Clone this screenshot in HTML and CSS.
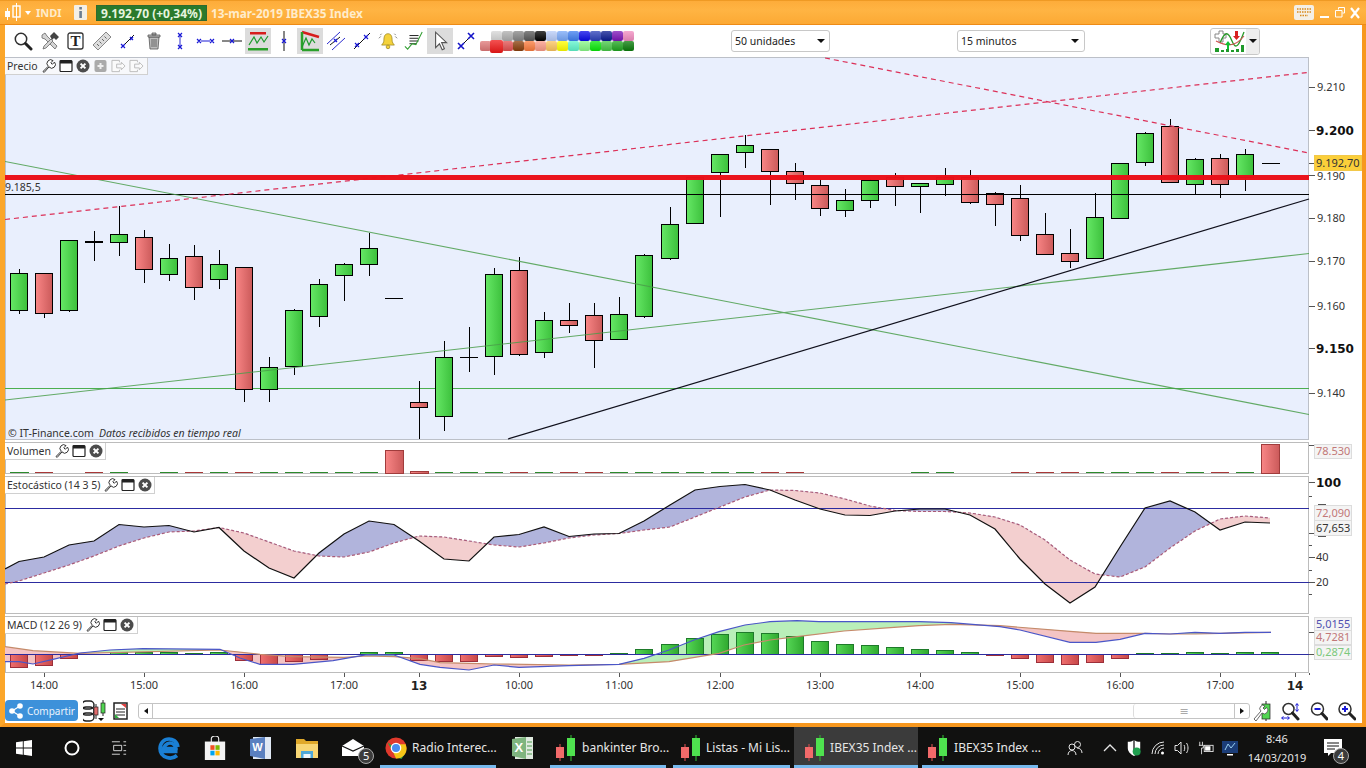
FILE: index.html
```html
<!DOCTYPE html>
<html lang="es">
<head>
<meta charset="utf-8">
<title>IBEX35 Index</title>
<link rel="stylesheet" href="styles.css">
</head>
<body>
<svg class="defs" aria-hidden="true">
  <defs>
    <linearGradient id="gg"><stop offset="0" stop-color="#66e866"/><stop offset="1" stop-color="#3cc03c"/></linearGradient>
    <linearGradient id="gr"><stop offset="0" stop-color="#f98686"/><stop offset="1" stop-color="#cb5a5a"/></linearGradient>
    <linearGradient id="gb"><stop offset="0" stop-color="#56d756"/><stop offset="1" stop-color="#2fa92f"/></linearGradient>
    <linearGradient id="gd"><stop offset="0" stop-color="#ef6f6f"/><stop offset="1" stop-color="#c84848"/></linearGradient>
    <clipPath id="aboveD"><polygon points="5,584 19,581 44,573 69,565 94,556 119,546 144,538 169,532 194,531 219,527.5 244,533 269,542 294,551 319,556 344,557 369,552 394,543 419,536 444,537 469,541 494,545 519,547 544,543 569,538 594,535 619,533.5 644,530 670,527 695,517 720,507 745,497 770,490 795,490.5 820,493 845,499 870,506 895,510.5 920,511.5 945,511.5 970,513 995,517 1020,525 1045,540 1070,560 1095,574 1120,577 1145,567 1170,548 1195,531 1220,519 1245,516 1270,518 1270,476 5,476"/></clipPath>
    <clipPath id="aboveS"><polygon points="5,646.7 33,650.7 67,652.7 80,653.3 220,650 260,654.3 293,656.7 344,657.3 367,656 394,656.7 420,658.7 440,662.7 469,663.3 494,664 569,665 619,664.3 669,661.7 719,653.3 744,645 770,640 797,636.7 844,631 894,627.3 919,625.7 951,624.3 1000,625.7 1070,631.3 1096,633.3 1145,633.3 1170,634 1195,634 1220,633.3 1271,632.3 1271,616 5,616"/></clipPath>
    <polygon id="stochFill" points="5,569 19,561.5 44,557 69,545 94,541 119,524.5 144,527 169,525.5 194,532 219,527.5 244,551 269,568 294,578 319,553 344,534 369,521 394,524.5 419,541 444,559 469,561 494,537 519,534.5 544,527 569,536.5 594,534 619,533.5 644,521 670,505 695,490 720,486.5 745,484.5 770,490 795,500 820,509 845,515 870,515.5 895,511 920,509 945,509 970,515 995,529 1020,559 1045,584 1070,603 1095,587 1120,547 1145,508 1170,501 1195,512 1220,530 1245,522 1270,523 1270,518 1245,516 1220,519 1195,531 1170,548 1145,567 1120,577 1095,574 1070,560 1045,540 1020,525 995,517 970,513 945,511.5 920,511.5 895,510.5 870,506 845,499 820,493 795,490.5 770,490 745,497 720,507 695,517 670,527 644,530 619,533.5 594,535 569,538 544,543 519,547 494,545 469,541 444,537 419,536 394,543 369,552 344,557 319,556 294,551 269,542 244,533 219,527.5 194,531 169,532 144,538 119,546 94,556 69,565 44,573 19,581 5,584"/>
    <polygon id="macdFill" points="5,661.7 19,661.7 33,664 53,659.3 80,653 110,650 143,648.7 220,649.3 240,658 260,664.3 293,664.3 333,660.7 367,654.7 394,655 420,664.3 440,667.3 469,670 494,665 519,667.3 569,665.7 619,664.3 644,658.3 669,650 694,640 719,631.7 745,625 770,621.7 797,620.7 819,621.7 919,621.7 951,622.7 1000,626.7 1020,630 1070,642.3 1096,642.3 1120,639.3 1145,633.3 1170,634 1195,632.3 1220,633.3 1245,632.3 1271,632.3 1220,633.3 1195,634 1170,634 1145,633.3 1096,633.3 1070,631.3 1000,625.7 951,624.3 919,625.7 894,627.3 844,631 797,636.7 770,640 744,645 719,653.3 669,661.7 619,664.3 569,665 494,664 469,663.3 440,662.7 420,658.7 394,656.7 367,656 344,657.3 293,656.7 260,654.3 220,650 80,653.3 67,652.7 33,650.7 5,646.7"/>
    <symbol id="wrench" viewBox="0 0 14 14"><path class="ic-out" d="M1 12.5 6.3 7.2A3.6 3.6 0 0 1 11 1.6L8.8 3.8 10.3 5.3 12.5 3.1A3.6 3.6 0 0 1 7 7.9L2.2 13.4Z"/></symbol>
    <symbol id="win" viewBox="0 0 14 14"><rect class="ic-win" x="1" y="1.5" width="12" height="11" rx="1"/><rect class="ic-dark" x="1" y="1.5" width="12" height="3"/></symbol>
    <symbol id="close" viewBox="0 0 14 14"><circle class="ic-close" cx="7" cy="7" r="6.5"/><path class="ic-x" d="M4.6 4.6 9.4 9.4M9.4 4.6 4.6 9.4"/></symbol>
    <symbol id="candleTask" viewBox="0 0 24 26"><path class="t-wg" d="M17 0V26"/><rect class="t-g" x="13" y="3" width="8" height="18"/><path class="t-wr" d="M6 9V26"/><rect class="t-r" x="2" y="12" width="8" height="11"/></symbol>
  </defs>
</svg>

<div class="app">
  <header class="title">
    <svg class="t-logo" viewBox="0 0 18 20"><rect class="wf" x="2" y="8" width="5" height="6"/><path class="ws" d="M4.500 5V17M13.500 0V18"/><rect class="wo" x="10" y="3" width="7" height="11"/></svg>
    <span class="caret"></span>
    <span class="t-sym">INDI</span>
    <svg class="t-info" viewBox="0 0 13 15"><rect class="if" width="13" height="15" rx="1"/><rect class="id" x="5.300" y="2" width="2.600" height="2.500"/><rect class="id" x="5.300" y="6" width="2.600" height="7"/></svg>
    <span class="t-price">9.192,70 (+0,34%)</span>
    <span class="t-date">13-mar-2019 IBEX35 Index</span>
    <span class="t-right">
      <svg class="t-kbd" viewBox="0 0 20 15"><rect class="if" width="20" height="15" rx="2"/><path class="kk" d="M3 4H17M3 7H17M6 10.500H14"/></svg>
      <svg class="t-ctl" viewBox="0 0 10 14"><rect class="wf" x="0" y="10" width="9" height="2"/></svg>
      <svg class="t-ctl" viewBox="0 0 10 14"><path class="ws" d="M3.500 3.500V1.500H9.500V7H7.500M.5 4.500H7V11H.5Z"/></svg>
      <svg class="t-ctl" viewBox="0 0 10 14"><path class="wx" d="M1 2 9 12M9 2 1 12"/></svg>
    </span>
  </header>

  <nav class="toolbar">
    <span class="tool first"><svg viewBox="0 0 20 20"><circle class="i-lens" cx="8" cy="8" r="5.700"/><path class="i-handle" d="M12.500 12.500 18 18"/></svg></span>
    <span class="tool"><svg viewBox="0 0 20 20"><path class="i-gray" d="M2 4 5 2 7 5 17 15 15 18 5 8 2 7Z"/><path class="i-gray" d="M4 15 11 8 13 10 6 17 3 18Z"/><path class="i-black" d="M10 5 14 1 19 6 16 9 14 7 12 9Z"/></svg></span>
    <span class="tool"><svg viewBox="0 0 20 20"><rect class="i-box" x="2" y="2" width="15" height="16" rx="2"/><text class="i-t" x="9.500" y="15">T</text></svg></span>
    <span class="tool"><svg viewBox="0 0 20 20"><path class="i-ruler" d="M1 14 14 1 19 6 6 19Z"/><path class="i-tick" d="M5 13 7 15M7.500 10.500 9.500 12.500M10 8 12 10M12.500 5.500 14.500 7.500"/></svg></span>
    <span class="tool"><svg viewBox="0 0 20 20"><path class="i-line" d="M4 16 16 4"/><path class="i-bx" d="M3 13 7 17M7 13 3 17M12 6 15 9M15 6 12 9"/></svg></span>
    <span class="tool"><svg viewBox="0 0 20 20"><path class="i-can" d="M5 6H15L14 18H6Z"/><path class="i-can" d="M4 4H16V6H4ZM8 2H12V4H8Z"/><path class="i-tick" d="M8 8V16M10 8V16M12 8V16"/></svg></span>
    <span class="tool"><svg viewBox="0 0 20 20"><path class="i-bl" d="M10 3V17"/><path class="i-bx" d="M8 2 12 6M12 2 8 6M8 14 12 18M12 14 8 18"/></svg></span>
    <span class="tool"><svg viewBox="0 0 20 20"><path class="i-bx" d="M1 8 5 12M5 8 1 12M14 8 18 12M18 8 14 12M5 10H14"/></svg></span>
    <span class="tool"><svg viewBox="0 0 20 20"><path class="i-line" d="M0 10H20"/><path class="i-bx" d="M8 8 12 12M12 8 8 12"/></svg></span>
    <span class="tool on"><svg viewBox="0 0 22 22"><rect class="i-redb" x="3" y="2" width="16" height="2.500"/><rect class="i-grnb" x="1" y="18" width="20" height="2.500"/><path class="i-zig" d="M2 15 7 7 10 13 14 7 17 12 21 6"/></svg></span>
    <span class="tool"><svg viewBox="0 0 20 20"><path class="i-line" d="M10 0V20"/><path class="i-bx" d="M8 8 12 12M12 8 8 12"/></svg></span>
    <span class="tool on"><svg viewBox="0 0 22 22"><path class="i-red2" d="M3 2 20 7"/><path class="i-grn2" d="M3 20H20M3 2V20"/><path class="i-zig" d="M3 17 7 8 10 15 13 9 16 13"/></svg></span>
    <span class="tool"><svg viewBox="0 0 20 20"><path class="i-bl" d="M1 13 14 1M6 19 19 7"/><path class="i-line" d="M4 14 14 6"/><path class="i-bx" d="M8 8 11 11M11 8 8 11"/></svg></span>
    <span class="tool"><svg viewBox="0 0 20 20"><path class="i-line" d="M2 18 18 2"/><path class="i-bx" d="M3 12 7 16M7 12 3 16M12 4 16 8M16 4 12 8"/></svg></span>
    <span class="tool"><svg viewBox="0 0 22 22"><path class="i-bell" d="M11 3C7 3 6.500 7 6.500 10 6.500 13 5 14 4 15.500H18C17 14 15.500 13 15.500 10 15.500 7 15 3 11 3Z"/><circle class="i-bell" cx="11" cy="17.500" r="2"/><path class="i-ray" d="M3 6 1 8M19 6 21 8M4 3 2.500 4.500M18 3 19.500 4.500"/></svg></span>
    <span class="tool"><svg viewBox="0 0 22 22"><path class="i-line" d="M6 5H16M6 8H16M6 11H16M6 14H14"/><path class="i-grn1" d="M1 17 4 20 9 14 13 15 20 1"/></svg></span>
    <span class="tool on"><svg viewBox="0 0 20 20"><path class="i-arrow" d="M6 2 6 16 9.500 12.500 12 18 14 17 11.500 11.500 16 11.500Z"/></svg></span>
    <span class="tool"><svg viewBox="0 0 20 20"><path class="i-line" d="M5 15 15 5"/><path class="i-bx2" d="M2 12 8 18M8 12 2 18M12 2 18 8M18 2 12 8"/></svg></span>
    <div class="palette">
      <div class="pal-row">
        <i class="sw c1"></i><i class="sw c2"></i><i class="sw c3"></i><i class="sw c4"></i><i class="sw c5"></i><i class="sw c6"></i><i class="sw c7"></i><i class="sw c8"></i><i class="sw c9"></i><i class="sw c10"></i><i class="sw c11"></i><i class="sw c12"></i><i class="sw c13"></i>
      </div>
      <div class="pal-row">
        <i class="sw d1"></i><i class="sw d2"></i><i class="sw d3"></i><i class="sw d4"></i><i class="sw d5"></i><i class="sw d6"></i><i class="sw d7"></i><i class="sw d8"></i><i class="sw d9"></i><i class="sw d10"></i><i class="sw d11"></i><i class="sw d12"></i><i class="sw d13"></i><i class="sw d14"></i>
      </div>
    </div>
    <span class="select sel-a">50 unidades<b class="sel-arrow"></b></span>
    <span class="select sel-b">15 minutos<b class="sel-arrow"></b></span>
    <span class="splitbtn">
      <svg class="split-ic" viewBox="0 0 34 24"><path class="p-gray" d="M3 5H7V2H11V5H14V9H11V13H7V9H3Z"/><path class="p-grn" d="M8 14C13 2 16 2 20 12S27 16 32 3"/><path class="p-red" d="M4 12C12 16 22 20 32 7"/><path class="p-up" d="M13 16 16 12 19 16H17V20H15V16Z"/><path class="p-dn" d="M23 2H26V7H28L24.500 11 21 7H23Z"/><path class="p-bars" d="M3 19H7V23H3ZM9 21H12V23H9ZM14 20H17V23H14ZM19 21H22V23H19ZM24 20H27V23H24ZM29 16H32V23H29Z"/></svg>
      <span class="split-arrow"><b class="sel-arrow"></b></span>
    </span>
  </nav>

  <main class="charts">
    <section class="pane pane-price">
      <svg class="plot" viewBox="5 57 1357 383" shape-rendering="crispEdges">
        <rect class="plot-bg" x="5.500" y="57.500" width="1303" height="381.500"/>
        <path class="h-green" d="M5 388.500H1309"/>
        <path class="wick" d="M19.500 269V314M44.500 273V318M69.500 240V312M94.500 231V261M119.500 206V256M144.500 230V283M169.500 244V281M194.500 245V300M219.500 250V289M244.500 267V402M269.500 357V402M294.500 309V375M319.500 279V327M344.500 263V301M369.500 233V276M419.500 381V439M444.500 341V431M469.500 327V372M494.500 268V375M519.500 257V356M544.500 312V358M569.500 303V333M594.500 303V368M619.500 297V339M644.500 254V318M670.500 207V260M720.500 154V217M745.500 135V168M770.500 149V205M795.500 163V200M820.500 179V216M845.500 189V217M870.500 179V208M895.500 173V206M920.500 183V213M945.500 168V196M970.500 170V204M995.500 192V226M1020.500 185V241M1045.500 213V254M1070.500 229V268M1095.500 193V258M1120.500 163V219M1145.500 132V166M1170.500 119V183M1195.500 158V194M1220.500 154V198M1245.500 149V191"/>
        <path class="doji-b" d="M85 241.500H103"/>
        <path class="wick" d="M385 298.500H403M460 357.500H478M1262 163.500H1280"/>
        <rect class="cg" x="10.500" y="273.500" width="17" height="37"/>
        <rect class="cr" x="35.500" y="273.500" width="17" height="40"/>
        <rect class="cg" x="60.500" y="240.500" width="17" height="70"/>
        <rect class="cg" x="110.500" y="234.500" width="17" height="8"/>
        <rect class="cr" x="135.500" y="237.500" width="17" height="32"/>
        <rect class="cg" x="160.500" y="258.500" width="17" height="16"/>
        <rect class="cr" x="185.500" y="256.500" width="17" height="31"/>
        <rect class="cg" x="210.500" y="264.500" width="17" height="15"/>
        <rect class="cr" x="235.500" y="267.500" width="17" height="122"/>
        <rect class="cg" x="260.500" y="367.500" width="17" height="22"/>
        <rect class="cg" x="285.500" y="310.500" width="17" height="56"/>
        <rect class="cg" x="310.500" y="284.500" width="17" height="32"/>
        <rect class="cg" x="335.500" y="264.500" width="17" height="11"/>
        <rect class="cg" x="360.500" y="248.500" width="17" height="16"/>
        <rect class="cr" x="410.500" y="402.500" width="17" height="5"/>
        <rect class="cg" x="435.500" y="357.500" width="17" height="59"/>
        <rect class="cg" x="485.500" y="274.500" width="17" height="82"/>
        <rect class="cr" x="510.500" y="270.500" width="17" height="84"/>
        <rect class="cg" x="535.500" y="320.500" width="17" height="32"/>
        <rect class="cr" x="560.500" y="320.500" width="17" height="5"/>
        <rect class="cr" x="585.500" y="315.500" width="17" height="25"/>
        <rect class="cg" x="610.500" y="314.500" width="17" height="25"/>
        <rect class="cg" x="635.500" y="255.500" width="17" height="61"/>
        <rect class="cg" x="661.500" y="224.500" width="17" height="34"/>
        <rect class="cg" x="686.500" y="177.500" width="17" height="46"/>
        <rect class="cg" x="711.500" y="154.500" width="17" height="18"/>
        <rect class="cg" x="736.500" y="145.500" width="17" height="7"/>
        <rect class="cr" x="761.500" y="149.500" width="17" height="22"/>
        <rect class="cr" x="786.500" y="171.500" width="17" height="12"/>
        <rect class="cr" x="811.500" y="185.500" width="17" height="23"/>
        <rect class="cg" x="836.500" y="200.500" width="17" height="10"/>
        <rect class="cg" x="861.500" y="180.500" width="17" height="20"/>
        <rect class="cr" x="886.500" y="177.500" width="17" height="9"/>
        <rect class="cg" x="911.500" y="183.500" width="17" height="3"/>
        <rect class="cg" x="936.500" y="177.500" width="17" height="7"/>
        <rect class="cr" x="961.500" y="177.500" width="17" height="25"/>
        <rect class="cr" x="986.500" y="193.500" width="17" height="11"/>
        <rect class="cr" x="1011.500" y="198.500" width="17" height="37"/>
        <rect class="cr" x="1036.500" y="234.500" width="17" height="20"/>
        <rect class="cr" x="1061.500" y="253.500" width="17" height="8"/>
        <rect class="cg" x="1086.500" y="217.500" width="17" height="41"/>
        <rect class="cg" x="1111.500" y="163.500" width="17" height="55"/>
        <rect class="cg" x="1136.500" y="133.500" width="17" height="29"/>
        <rect class="cr" x="1161.500" y="126.500" width="17" height="56"/>
        <rect class="cg" x="1186.500" y="159.500" width="17" height="25"/>
        <rect class="cr" x="1211.500" y="158.500" width="17" height="26"/>
        <rect class="cg" x="1236.500" y="154.500" width="17" height="23"/>
        <path class="h-black" d="M5 194.500H1309"/>
        <g shape-rendering="auto">
          <path class="t-green" d="M5 161.500 1309 414.500M5 400 1309 253.500"/>
          <path class="t-black" d="M508 439 1309 199"/>
          <path class="t-red" d="M5 219.500 1307 72.500M825 58 1309 153"/>
        </g>
        <rect class="h-red" x="5" y="175" width="1304" height="4.500"/>
        <text class="lbl" x="5" y="191">9.185,5</text>
        <text class="lbl" x="8" y="437">© IT-Finance.com</text>
        <text class="lbl it" x="99" y="437">Datos recibidos en tiempo real</text>
        <path class="tick" d="M1309 87.500H1315M1309 130.500H1315M1309 163.500H1315M1309 175.500H1315M1309 218.500H1315M1309 261.500H1315M1309 306.500H1315M1309 348.500H1315M1309 393.500H1315"/>
        <text class="ax" x="1317" y="91">9.210</text>
        <text class="ax ax-b" x="1316" y="135">9.200</text>
        <text class="ax" x="1317" y="180">9.190</text>
        <text class="ax" x="1317" y="222">9.180</text>
        <text class="ax" x="1317" y="265">9.170</text>
        <text class="ax" x="1317" y="310">9.160</text>
        <text class="ax ax-b" x="1316" y="353">9.150</text>
        <text class="ax" x="1317" y="397">9.140</text>
        <rect class="b-yellow" x="1314.500" y="155.500" width="47" height="15"/>
        <text class="ax" x="1316" y="167">9.192,70</text>
      </svg>
      <div class="legend leg-price"><span>Precio</span><svg class="li"><use href="#wrench"/></svg><svg class="li"><use href="#win"/></svg><svg class="li"><use href="#close"/></svg><svg class="li-dis" viewBox="0 0 14 14"><rect class="d-box" x="1" y="1" width="12" height="12" rx="2"/><path class="d-plus" d="M7 4V10M4 7H10"/></svg><svg class="li-dis" viewBox="0 0 16 14"><path class="d-out" d="M9 3V1H1V13H9V11M6 5H11V3L15 7 11 11V9H6Z"/></svg><svg class="li-dis" viewBox="0 0 16 14"><path class="d-out" d="M9 3V1H1V13H9V11M6 5H11V3L15 7 11 11V9H6Z"/></svg></div>
    </section>

    <section class="pane pane-vol">
      <svg class="plot" viewBox="5 442 1357 32" shape-rendering="crispEdges">
        <rect class="plot-w" x="5.500" y="442.500" width="1303" height="31"/>
        <path class="v-g" d="M10 472.500H29M110 472.500H128M160 472.500H178M210 472.500H228M260 472.500H278M285 472.500H303M310 472.500H328M335 472.500H353M360 472.500H378M435 472.500H453M460 472.500H478M485 472.500H503M535 472.500H553M610 472.500H628M635 472.500H653M661 472.500H679M686 472.500H704M711 472.500H729M736 472.500H754M911 472.500H929M936 472.500H954M1086 472.500H1104M1111 472.500H1129M1136 472.500H1154M1186 472.500H1204M1236 472.500H1254"/>
        <path class="v-r" d="M35 472.500H53M85 472.500H103M185 472.500H203M235 472.500H253M510 472.500H528M560 472.500H578M585 472.500H603M761 472.500H779M786 472.500H804M1011 472.500H1029M1036 472.500H1054M1061 472.500H1079M1161 472.500H1179M1211 472.500H1229"/>
        <rect class="vb" x="385.500" y="450.500" width="18" height="23"/>
        <rect class="vb" x="410.500" y="471.500" width="18" height="2"/>
        <rect class="vb" x="1261.500" y="444.500" width="18" height="29"/>
        <path class="tick" d="M1309 445.500H1314"/>
        <rect class="b-grey" x="1314.500" y="444.500" width="37" height="14"/>
        <text class="ax ax-r" x="1316" y="455">78.530</text>
      </svg>
      <div class="legend leg-vol"><span>Volumen</span><svg class="li"><use href="#wrench"/></svg><svg class="li"><use href="#win"/></svg><svg class="li"><use href="#close"/></svg></div>
    </section>

    <section class="pane pane-sto">
      <svg class="plot" viewBox="5 476 1357 138">
        <rect class="plot-w crisp" x="5.500" y="476.500" width="1303" height="137"/>
        <use href="#stochFill" class="f-pink"/>
        <use href="#stochFill" class="f-blue" clip-path="url(#aboveD)"/>
        <path class="h-blue crisp" d="M5 508.500H1309M5 582.500H1309"/>
        <polyline class="l-d" points="5,584 19,581 44,573 69,565 94,556 119,546 144,538 169,532 194,531 219,527.5 244,533 269,542 294,551 319,556 344,557 369,552 394,543 419,536 444,537 469,541 494,545 519,547 544,543 569,538 594,535 619,533.5 644,530 670,527 695,517 720,507 745,497 770,490 795,490.5 820,493 845,499 870,506 895,510.5 920,511.5 945,511.5 970,513 995,517 1020,525 1045,540 1070,560 1095,574 1120,577 1145,567 1170,548 1195,531 1220,519 1245,516 1270,518"/>
        <polyline class="l-k" points="5,569 19,561.5 44,557 69,545 94,541 119,524.5 144,527 169,525.5 194,532 219,527.5 244,551 269,568 294,578 319,553 344,534 369,521 394,524.5 419,541 444,559 469,561 494,537 519,534.5 544,527 569,536.5 594,534 619,533.5 644,521 670,505 695,490 720,486.5 745,484.5 770,490 795,500 820,509 845,515 870,515.5 895,511 920,509 945,509 970,515 995,529 1020,559 1045,584 1070,603 1095,587 1120,547 1145,508 1170,501 1195,512 1220,530 1245,522 1270,523"/>
        <path class="tick crisp" d="M1309 482.500H1315M1309 496.500H1312M1309 533.500H1315M1309 545.500H1312M1309 557.500H1315M1309 570.500H1312M1309 582.500H1315M1309 594.500H1312M1318 504.500H1326M1318 536.500H1326"/>
        <text class="ax ax-b" x="1316" y="487">100</text>
        <text class="ax" x="1316" y="561">40</text>
        <text class="ax" x="1316" y="586">20</text>
        <rect class="b-grey crisp" x="1314.500" y="505.500" width="37" height="15"/>
        <text class="ax ax-r" x="1316" y="517">72,090</text>
        <rect class="b-grey crisp" x="1314.500" y="520.500" width="37" height="15"/>
        <text class="ax" x="1316" y="532">67,653</text>
      </svg>
      <div class="legend leg-sto"><span>Estocástico (14 3 5)</span><svg class="li"><use href="#wrench"/></svg><svg class="li"><use href="#win"/></svg><svg class="li"><use href="#close"/></svg></div>
    </section>

    <section class="pane pane-macd">
      <svg class="plot" viewBox="5 616 1357 57">
        <rect class="plot-w crisp" x="5.500" y="616.500" width="1303" height="56"/>
        <use href="#macdFill" class="f-pink2"/>
        <use href="#macdFill" class="f-green" clip-path="url(#aboveS)"/>
        <g class="crisp">
          <rect class="hr" x="10.500" y="654.500" width="17" height="13"/><rect class="hr" x="35.500" y="654.500" width="17" height="11"/><rect class="hr" x="60.500" y="654.500" width="17" height="4"/>
          <rect class="hg" x="110.500" y="652.500" width="17" height="2"/><rect class="hg" x="135.500" y="652.500" width="17" height="2"/><rect class="hg" x="160.500" y="652.500" width="17" height="2"/><rect class="hg" x="185.500" y="653.500" width="17" height="1"/><rect class="hg" x="210.500" y="652.500" width="17" height="2"/>
          <rect class="hr" x="235.500" y="654.500" width="17" height="6"/><rect class="hr" x="260.500" y="654.500" width="17" height="10"/><rect class="hr" x="285.500" y="654.500" width="17" height="7"/><rect class="hr" x="310.500" y="654.500" width="17" height="5"/>
          <rect class="hg" x="360.500" y="652.500" width="17" height="2"/><rect class="hg" x="385.500" y="652.500" width="17" height="2"/>
          <rect class="hr" x="410.500" y="654.500" width="17" height="6"/><rect class="hr" x="435.500" y="654.500" width="17" height="7"/><rect class="hr" x="460.500" y="654.500" width="17" height="7"/>
          <rect class="hr" x="485.500" y="654.500" width="17" height="2"/><rect class="hr" x="510.500" y="654.500" width="17" height="3"/><rect class="hr" x="535.500" y="654.500" width="17" height="2"/><rect class="hr" x="560.500" y="654.500" width="17" height="1"/><rect class="hr" x="585.500" y="654.500" width="17" height="1"/>
          <rect class="hg" x="610.500" y="653.500" width="17" height="1"/><rect class="hg" x="635.500" y="649.500" width="17" height="5"/><rect class="hg" x="661.500" y="644.500" width="17" height="10"/><rect class="hg" x="686.500" y="638.500" width="17" height="16"/><rect class="hg" x="711.500" y="634.500" width="17" height="20"/><rect class="hg" x="736.500" y="632.500" width="17" height="22"/><rect class="hg" x="761.500" y="633.500" width="17" height="21"/><rect class="hg" x="786.500" y="636.500" width="17" height="18"/><rect class="hg" x="811.500" y="641.500" width="17" height="13"/><rect class="hg" x="836.500" y="644.500" width="17" height="10"/><rect class="hg" x="861.500" y="645.500" width="17" height="9"/><rect class="hg" x="886.500" y="647.500" width="17" height="7"/><rect class="hg" x="911.500" y="649.500" width="17" height="5"/><rect class="hg" x="936.500" y="650.500" width="17" height="4"/><rect class="hg" x="961.500" y="652.500" width="17" height="2"/>
          <rect class="hr" x="986.500" y="654.500" width="17" height="1"/><rect class="hr" x="1011.500" y="654.500" width="17" height="4"/><rect class="hr" x="1036.500" y="654.500" width="17" height="8"/><rect class="hr" x="1061.500" y="654.500" width="17" height="10"/><rect class="hr" x="1086.500" y="654.500" width="17" height="8"/><rect class="hr" x="1111.500" y="654.500" width="17" height="4"/>
          <rect class="hg" x="1136.500" y="653.500" width="17" height="1"/><rect class="hg" x="1161.500" y="653.500" width="17" height="1"/><rect class="hg" x="1186.500" y="652.500" width="17" height="2"/><rect class="hg" x="1211.500" y="653.500" width="17" height="1"/><rect class="hg" x="1236.500" y="652.500" width="17" height="2"/><rect class="hg" x="1261.500" y="652.500" width="17" height="2"/>
        </g>
        <path class="h-blue crisp" d="M5 654.500H1309"/>
        <polyline class="l-sig" points="5,646.7 33,650.7 67,652.7 80,653.3 220,650 260,654.3 293,656.7 344,657.3 367,656 394,656.7 420,658.7 440,662.7 469,663.3 494,664 569,665 619,664.3 669,661.7 719,653.3 744,645 770,640 797,636.7 844,631 894,627.3 919,625.7 951,624.3 1000,625.7 1070,631.3 1096,633.3 1145,633.3 1170,634 1195,634 1220,633.3 1271,632.3"/>
        <polyline class="l-macd" points="5,661.7 19,661.7 33,664 53,659.3 80,653 110,650 143,648.7 220,649.3 240,658 260,664.3 293,664.3 333,660.7 367,654.7 394,655 420,664.3 440,667.3 469,670 494,665 519,667.3 569,665.7 619,664.3 644,658.3 669,650 694,640 719,631.7 745,625 770,621.7 797,620.7 819,621.7 919,621.7 951,622.7 1000,626.7 1020,630 1070,642.3 1096,642.3 1120,639.3 1145,633.3 1170,634 1195,632.3 1220,633.3 1245,632.3 1271,632.3"/>
        <path class="tick crisp" d="M1309 632.500H1315M1309 654.500H1315"/>
        <rect class="b-grey crisp" x="1314.500" y="617.500" width="37" height="13"/>
        <text class="ax ax-bl" x="1316" y="628">5,0155</text>
        <rect class="b-grey crisp" x="1314.500" y="630.500" width="37" height="14"/>
        <text class="ax ax-r" x="1316" y="641">4,7281</text>
        <rect class="b-grey crisp" x="1314.500" y="645.500" width="37" height="14"/>
        <text class="ax ax-g" x="1316" y="656">0,2874</text>
      </svg>
      <div class="legend leg-macd"><span>MACD (12 26 9)</span><svg class="li"><use href="#wrench"/></svg><svg class="li"><use href="#win"/></svg><svg class="li"><use href="#close"/></svg></div>
    </section>

    <section class="pane pane-time">
      <svg class="plot" viewBox="5 673 1357 24" shape-rendering="crispEdges">
        <path class="tick" d="M44.500 673V677M144.500 673V677M244.500 673V677M344.500 673V677M419.500 673V677M519.500 673V677M619.500 673V677M720.500 673V677M820.500 673V677M920.500 673V677M1020.500 673V677M1120.500 673V677M1220.500 673V677M1295.500 673V677M1309.500 673V675"/>
        <text class="tm" x="44" y="689">14:00</text><text class="tm" x="144" y="689">15:00</text><text class="tm" x="244" y="689">16:00</text><text class="tm" x="344" y="689">17:00</text><text class="tm tm-b" x="419" y="690">13</text><text class="tm" x="519" y="689">10:00</text><text class="tm" x="619" y="689">11:00</text><text class="tm" x="720" y="689">12:00</text><text class="tm" x="820" y="689">13:00</text><text class="tm" x="920" y="689">14:00</text><text class="tm" x="1020" y="689">15:00</text><text class="tm" x="1120" y="689">16:00</text><text class="tm" x="1220" y="689">17:00</text><text class="tm tm-b" x="1295" y="690">14</text>
      </svg>
    </section>
  </main>

  <footer class="bottom">
    <span class="share"><svg class="share-ic" viewBox="0 0 14 16"><path class="sh-l" d="M3 8 11 3M3 8 11 13"/><circle class="sh-c" cx="3" cy="8" r="2.800"/><circle class="sh-c" cx="11" cy="3" r="2.800"/><circle class="sh-c" cx="11" cy="13" r="2.800"/></svg>Compartir</span>
    <svg class="b-ic1" viewBox="0 0 24 22"><path class="bi-chain" d="M3 1H7A2 2 0 0 1 7 9H3A2 2 0 0 1 3 1ZM3 7H7A2 2 0 0 1 7 15H3A2 2 0 0 1 3 7ZM3 13H7A2 2 0 0 1 7 21H3A2 2 0 0 1 3 13Z"/><path class="bi-w" d="M13 4V19M20 0V16"/><rect class="bi-r" x="11" y="7" width="4" height="8"/><rect class="bi-g" x="18" y="3" width="4" height="10"/><path class="bi-a" d="M15 18H21L18 21Z"/></svg>
    <svg class="b-ic2" viewBox="0 0 15 18"><rect class="bi-doc" x="1" y="1" width="13" height="16"/><path class="bi-ln" d="M3 7H12M3 10H12M3 13H12"/><path class="bi-rt" d="M8 2H13V6Z"/><path class="bi-gt" d="M2 16V12L6 16Z"/></svg>
    <div class="track">
      <span class="tr-btn"><b class="arr-l"></b></span>
      <span class="tr-fill"></span>
      <span class="tr-thumb">≡</span>
      <span class="tr-btn tr-r"><b class="arr-r"></b></span>
    </div>
    <svg class="z z1" viewBox="0 0 18 20"><path class="bi-w" d="M13 0V20"/><rect class="bi-g" x="9" y="3" width="8" height="15"/><path class="z-wr" d="M1 18 8 10A3 3 0 0 1 12 5L10 7 11.500 8.500 13.500 6.500A3 3 0 0 1 9 12L3 20Z"/></svg>
    <svg class="z z2" viewBox="0 0 20 20"><circle class="i-lens" cx="7.500" cy="8" r="5.500"/><path class="i-handle" d="M11.500 12 17 18"/><path class="z-bl" d="M16 3V10M14.500 4.500 16 2.500 17.500 4.500M14.500 8.500 16 10.500 17.500 8.500M1 17H8M2.500 15.500 .5 17 2.500 18.500M6.500 15.500 8.500 17 6.500 18.500"/></svg>
    <svg class="z z3" viewBox="0 0 18 20"><circle class="i-lens" cx="7.500" cy="8" r="6"/><path class="i-handle" d="M12 12.500 17 18"/><path class="z-bl2" d="M4.500 8H10.500"/></svg>
    <svg class="z z4" viewBox="0 0 19 20"><circle class="i-lens" cx="8" cy="8" r="6"/><path class="i-handle" d="M12.500 12.500 18 18"/><path class="z-bl2" d="M5 8H11M8 5V11"/></svg>
  </footer>
</div>

<div class="taskbar">
  <span class="tb w48"><svg class="tbi-win" viewBox="0 0 16 16"><path class="wf" d="M0 2.300 6.800 1.300V7.600H0ZM7.700 1.200 16 0V7.600H7.700ZM0 8.400H6.800V14.700L0 13.700ZM7.700 8.400H16V16L7.700 14.800Z"/></svg></span>
  <span class="tb w48"><svg class="tbi-16" viewBox="0 0 16 16"><circle class="cort" cx="8" cy="8" r="6.500"/></svg></span>
  <span class="tb w48"><svg class="tbi-16" viewBox="0 0 18 16"><path class="tv" d="M1 1H10M1 15H10M3 5H12V11H3ZM14 1H17M14 5H17M14 11H17M14 15H17"/></svg></span>
  <span class="tb w46 ml"><svg class="tbi-24" viewBox="0 0 24 24"><path class="edge" d="M20.500 15.500H6C6 10 10 7 13 7S19 10 19 12.500H8M20 19.500C17 22 13 22.500 10 21.500 5 20 3 16 3 12.500 3 7 7 3 12 3 15 3 20 4.500 21 11"/></svg></span>
  <span class="tb w46"><svg class="tbi-24" viewBox="0 0 24 26"><path class="st-bag" d="M1 6H23V26H1Z"/><path class="st-h" d="M8 7V3A4 3 0 0 1 16 3V7"/><rect class="s1" x="7" y="10" width="4.500" height="5"/><rect class="s2" x="12.500" y="10" width="4.500" height="5"/><rect class="s3" x="7" y="16" width="4.500" height="5"/><rect class="s4" x="12.500" y="16" width="4.500" height="5"/></svg></span>
  <span class="tb w46"><svg class="tbi-24" viewBox="0 0 24 24"><path class="w-p" d="M4 1H22V23H4Z"/><path class="w-b" d="M1 3 16 1V23L1 20Z"/><text class="w-t" x="8.500" y="15">W</text></svg></span>
  <span class="tb w46"><svg class="tbi-24" viewBox="0 0 24 24"><path class="fo-b" d="M1 3H9L11 5H23V21H1Z"/><path class="fo-f" d="M1 8H23V22H1Z"/><rect class="fo-d" x="6" y="15" width="12" height="7"/><rect class="fo-w" x="8.500" y="18" width="7" height="4"/></svg></span>
  <span class="tb w46 tb-badge"><svg class="tbi-24" viewBox="0 0 24 20"><path class="wf" d="M1 8 12 1 23 8V18H1Z"/><path class="mail-l" d="M1 8 12 13 23 8"/></svg><b class="badge b5">5</b></span>
  <span class="tb app-w116 ml4 tb-left pl5"><svg class="tbi-22" viewBox="0 0 24 24"><circle class="ch-r" cx="12" cy="12" r="11.500"/><path class="ch-g" d="M2.800 6 12 22 18 24 22 18 12 12Z"/><path class="ch-y" d="M22.500 8H12L7 12 12 23.500C19 24 24 18 23.500 12Z"/><circle class="ch-w" cx="12" cy="12" r="5.800"/><circle class="ch-b" cx="12" cy="12" r="4.400"/></svg><span class="tb-txt">Radio Interec...</span><i class="under"></i></span>
  <span class="tb w47 ml3"><svg class="tbi-24" viewBox="0 0 24 24"><path class="x-p" d="M4 1H22V23H4Z"/><path class="x-g" d="M1 3 15 1V23L1 20Z"/><text class="x-t" x="3.500" y="16">X</text><path class="x-l" d="M16 6H21M16 10H21M16 14H21M16 18H21"/></svg></span>
  <span class="tb app-w116 ml4 tb-left pl4"><svg class="tbi-c"><use href="#candleTask"/></svg><span class="tb-txt g4">bankinter Bro...</span><i class="under"></i></span>
  <span class="tb app-w117 ml7 tb-left pl6"><svg class="tbi-c"><use href="#candleTask"/></svg><span class="tb-txt g3">Listas - Mi Lis...</span><i class="under"></i></span>
  <span class="tb app-w124 ml4 tb-left pl9 active"><svg class="tbi-c"><use href="#candleTask"/></svg><span class="tb-txt g3">IBEX35 Index ...</span><i class="under"></i></span>
  <span class="tb app-w116 ml4 tb-left pl4"><svg class="tbi-c"><use href="#candleTask"/></svg><span class="tb-txt g4">IBEX35 Index ...</span><i class="under"></i></span>
  <span class="tray">
    <span class="tb w38"><svg class="tbi-16" viewBox="0 0 16 16"><circle class="tr-l" cx="10.500" cy="4.500" r="3"/><circle class="tr-l" cx="5" cy="7" r="3"/><path class="tr-l" d="M1 15C1 12 3 10.500 5 10.500S9 12 9 15M10 8C13 8 15 10 15 13"/></svg></span>
    <span class="tb w24 ml4"><svg class="tbi-14" viewBox="0 0 14 14"><path class="tr-l2" d="M1 10 7 4 13 10"/></svg></span>
    <span class="tb w24"><svg class="tbi-16" viewBox="0 0 16 18"><path class="wf" d="M8 0C10 1.500 12 2 15 2V9C15 13 12 16 8 18 4 16 1 13 1 9V2C4 2 6 1.500 8 0Z"/><rect class="shield-k" x="7.300" y="0" width="1.400" height="12"/><circle class="shield-g" cx="11" cy="13" r="4.500"/></svg></span>
    <span class="tb w24"><svg class="tbi-16" viewBox="0 0 16 16"><path class="tr-l" d="M2 14A12 12 0 0 1 14 2M5 14A9 9 0 0 1 14 5M8 14A6 6 0 0 1 14 8"/><circle class="wf" cx="12.500" cy="13" r="1.500"/></svg></span>
    <span class="tb w24"><svg class="tbi-16" viewBox="0 0 16 16"><path class="tr-l" d="M1 5.500H3.500L7 2V14L3.500 10.500H1ZM10 5C11 6.500 11 9.500 10 11M12.500 3C14.500 6 14.500 10 12.500 13"/></svg></span>
    <span class="tb w24"><svg class="tbi-16" viewBox="0 0 18 16"><path class="tr-l" d="M2 1V5M5 1V5M1 5H6V8H4V15"/><rect class="tr-l" x="7" y="5" width="10" height="7"/><rect class="wf" x="8" y="6" width="6" height="5"/></svg></span>
    <span class="tb w24"><svg class="tbi-16" viewBox="0 0 16 16"><rect class="mon" x="0" y="1" width="16" height="12"/><path class="mon-l" d="M3 10 6 4 9 8 13 3"/><rect class="wf" x="5" y="14" width="6" height="1.500"/></svg></span>
    <span class="clock"><span>8:46</span><span>14/03/2019</span></span>
    <span class="tb w42 tb-badge"><svg class="tbi-20" viewBox="0 0 20 20"><path class="wf" d="M1 1H19V15H8L5 18V15H1Z"/><path class="note-l" d="M4 5H16M4 8H16M4 11H12"/></svg><b class="badge b4">4</b></span>
  </span>
</div>
</body>
</html>
```
FILE: styles.css
```css
html, body { margin: 0; padding: 0; }
body { width: 1366px; height: 768px; overflow: hidden; display: flex; flex-direction: column; font-family: "Noto Sans", "DejaVu Sans", sans-serif; font-size: 11px; color: #333; background: #111; }
svg { display: block; flex: none; }
.defs { width: 0; height: 0; overflow: hidden; }

.app { height: 727px; flex: none; display: flex; flex-direction: column; background: #fff; border-left: 5px solid #fba62a; border-right: 4px solid #f7981f; border-bottom: 4px solid #f7981f; box-sizing: border-box; }

/* title bar */
.title { height: 25px; margin-left: -5px; margin-right: -4px; flex: none; display: flex; align-items: center; box-sizing: border-box; background: linear-gradient(#fdac3a, #ffb443 40%, #fca934); border-top: 1px solid #ef9a24; border-bottom: 1px solid #ee8b16; color: #ffeccb; font-size: 12px; font-weight: 700; }
.t-logo { width: 18px; height: 20px; margin-left: 3px; }
.wf { fill: #fff; }
.ws { fill: none; stroke: #fff; stroke-width: 1; }
.wo { fill: none; stroke: #fff; stroke-width: 1.4; }
.wx { fill: none; stroke: #fff; stroke-width: 2.2; }
.caret { width: 0; height: 0; margin-left: 4px; border-left: 3.500px solid transparent; border-right: 3.500px solid transparent; border-top: 4px solid #fff; }
.t-sym { margin-left: 5px; width: 38px; font-size: 11px; }
.t-info { width: 13px; height: 15px; }
.if { fill: #f4efe6; }
.id { fill: #6b7d92; }
.t-price { margin-left: 9px; width: 111px; height: 16px; line-height: 15px; text-align: center; background: #2a7a2c; color: #e6f5df; font-size: 12px; box-sizing: border-box; border: 1px solid #2f6a2f; white-space: nowrap; }
.t-date { margin-left: 4px; white-space: nowrap; font-size: 11.800px; }
.t-right { margin-left: auto; display: flex; align-items: center; gap: 5px; padding-right: 6px; }
.t-kbd { width: 20px; height: 15px; margin-right: 1px; }
.kk { fill: none; stroke: #d98a1d; stroke-width: 1.400; stroke-dasharray: 1.500 1; }
.t-ctl { width: 10px; height: 14px; }

/* toolbar */
.toolbar { height: 32px; flex: none; display: flex; align-items: center; padding-left: 4px; background: #fff; }
.tool { width: 26px; height: 26px; flex: none; display: flex; align-items: center; justify-content: center; }
.tool svg { width: 20px; height: 20px; }
.tool.first { width: 28px; }
.tool.on { background: #dcdcdc; }
.tool.on svg { width: 22px; height: 22px; }
.i-lens { fill: #fff; stroke: #2f2f2f; stroke-width: 1.500; }
.i-handle { stroke: #222; stroke-width: 3; stroke-linecap: round; fill: none; }
.i-gray { fill: #d4d4d4; stroke: #666; stroke-width: .8; }
.i-black { fill: #444; }
.i-box { fill: #fff; stroke: #333; stroke-width: 1.300; }
.i-t { font-family: "Liberation Serif", serif; font-size: 15px; font-weight: 700; fill: #222; text-anchor: middle; }
.i-ruler { fill: #ddd; stroke: #888; stroke-width: 1; }
.i-tick { stroke: #666; stroke-width: 1; fill: none; }
.i-line { stroke: #111; stroke-width: 1; fill: none; }
.i-bl { stroke: #2d2dd0; stroke-width: 1; fill: none; }
.i-bx { stroke: #1a1ad6; stroke-width: 1.200; fill: none; }
.i-bx2 { stroke: #1414c8; stroke-width: 1.600; fill: none; }
.i-can { fill: #bdbdbd; stroke: #555; stroke-width: .8; }
.i-redb { fill: #d71d1d; }
.i-grnb { fill: #2aa02a; }
.i-zig { fill: none; stroke: #1c9a2c; stroke-width: 1.200; }
.i-red2 { stroke: #d71d1d; stroke-width: 2.500; fill: none; }
.i-grn2 { stroke: #2aa02a; stroke-width: 2.500; fill: none; }
.i-grn1 { stroke: #35a035; stroke-width: 1.200; fill: none; }
.i-bell { fill: #f4d23c; stroke: #998320; stroke-width: .8; }
.i-ray { stroke: #777; fill: none; stroke-width: 1; }
.i-arrow { fill: #fff; stroke: #555; stroke-width: 1; }

.palette { width: 153px; margin-left: 2px; display: flex; flex-direction: column; align-items: flex-end; gap: 0; }
.pal-row { display: flex; }
.sw { display: block; width: 11px; height: 10px; border-radius: 2px; background-image: linear-gradient(rgba(255,255,255,.25), rgba(0,0,0,.1)); }
.c1 { background-color: #d6d6d6; } .c2 { background-color: #aeaeae; } .c3 { background-color: #858585; } .c4 { background-color: #585858; } .c5 { background-color: #000; }
.c6 { background-color: #b8ccf8; } .c7 { background-color: #78a8f8; } .c8 { background-color: #3f7ff0; } .c9 { background-color: #0a0ae8; } .c10 { background-color: #2a3fb8; } .c11 { background-color: #0a1a90; } .c12 { background-color: #7c14b8; } .c13 { background-color: #f28cc0; }
.d1 { background-color: #e07878; } .d2 { background-color: #f01818; width: 13px; height: 13px; margin: -1px -1px -2px; position: relative; } .d3 { background-color: #e25050; } .d4 { background-color: #8a3f0c; } .d5 { background-color: #fb7c3e; } .d6 { background-color: #fb9a86; } .d7 { background-color: #fcc45e; } .d8 { background-color: #ffff00; } .d9 { background-color: #5ff5cc; } .d10 { background-color: #88f888; } .d11 { background-color: #08e808; } .d12 { background-color: #46c846; } .d13 { background-color: #1fa51f; } .d14 { background-color: #0a7c0a; }
.sel-a, .sel-b { display: flex; align-items: center; }
.select { height: 22px; margin-top: -1px; box-sizing: border-box; border: 1px solid #c8c8c8; border-radius: 3px; padding-left: 3px; position: relative; justify-content: space-between; color: #222; font-size: 10.500px; }
.sel-a { width: 99px; margin-left: 97px; padding-right: 4px; }
.sel-b { width: 128px; margin-left: 127px; padding-right: 5px; }
.sel-arrow { width: 0; height: 0; border-left: 4px solid transparent; border-right: 4px solid transparent; border-top: 4px solid #111; display: block; }
.splitbtn { width: 50px; height: 27px; margin-left: 125px; box-sizing: border-box; border: 1px solid #c8c8c8; border-radius: 3px; display: flex; align-items: center; overflow: hidden; }
.split-ic { width: 34px; height: 24px; margin-left: 1px; }
.split-arrow { flex: 1; height: 100%; background: #eee; display: flex; align-items: center; justify-content: center; }
.p-gray { fill: #fff; stroke: #888; stroke-width: 1; }
.p-grn { fill: none; stroke: #2a9a2a; stroke-width: 1.300; }
.p-red { fill: none; stroke: #d05050; stroke-width: 1.100; }
.p-up { fill: #10c030; }
.p-dn { fill: #d82020; }
.p-bars { fill: #1e9a2a; }

/* charts */
.charts { flex: none; display: flex; flex-direction: column; gap: 2px; }
.pane { position: relative; flex: none; }
.plot { width: 1357px; height: 100%; }
.pane-price { height: 383px; }
.pane-vol { height: 32px; }
.pane-sto { height: 138px; }
.pane-macd { height: 57px; }
.pane-time { height: 24px; margin-top: -2px; }
.plot-bg { fill: #e9effd; stroke: #bcc0c8; stroke-width: 1; }
.plot-w { fill: #fff; stroke: #bcbcbc; stroke-width: 1; }
.crisp { shape-rendering: crispEdges; }
.wick { stroke: #000; stroke-width: 1; fill: none; }
.doji-b { stroke: #000; stroke-width: 2; fill: none; }
.cg, .cr { stroke: #000; stroke-width: 1; }
.cg { fill: url(#gg); }
.cr { fill: url(#gr); }
.h-green { stroke: #4caf50; stroke-width: 1; fill: none; }
.h-black { stroke: #000; stroke-width: 1; fill: none; }
.h-red { fill: #ea0f18; opacity: .98; }
.t-green { stroke: #4a9e4a; stroke-width: 1.100; fill: none; opacity: .85; }
.t-black { stroke: #10101c; stroke-width: 1.200; fill: none; }
.t-red { stroke: #dc3058; stroke-width: 1.200; fill: none; stroke-dasharray: 5 4; }
.lbl { font-size: 10.500px; fill: #333; }
.it { font-style: italic; }
.ax { font-size: 11px; fill: #333; }
.ax-b { font-family: "DejaVu Sans", sans-serif; font-size: 12px; font-weight: 700; fill: #111; }
.ax-r { fill: #c27878; }
.ax-bl { fill: #5050b0; }
.ax-g { fill: #7cc87c; }
.tick { stroke: #555; stroke-width: 1; fill: none; }
.b-yellow { fill: #fbcf3a; stroke: #f2c84a; stroke-width: 1; }
.b-grey { fill: #f4f4f4; stroke: #dcdcdc; stroke-width: 1; }
.v-g { stroke: #2d8a2d; stroke-width: 1.500; fill: none; }
.v-r { stroke: #a83838; stroke-width: 1.500; fill: none; }
.vb { fill: url(#gr); stroke: #a03c3c; stroke-width: 1; }
.f-pink { fill: #f3cfcf; }
.f-blue { fill: #b1b4dc; }
.f-pink2 { fill: #f4c4c4; }
.f-green { fill: #b9efb9; }
.h-blue { stroke: #2c2ca0; stroke-width: 1; fill: none; }
.l-k { fill: none; stroke: #111; stroke-width: 1.200; }
.l-d { fill: none; stroke: #a85a78; stroke-width: 1.200; stroke-dasharray: 3 2; }
.l-sig { fill: none; stroke: #c58a6a; stroke-width: 1.200; }
.l-macd { fill: none; stroke: #4a56c8; stroke-width: 1.200; }
.hg, .hr { stroke-width: 1; }
.hg { fill: url(#gb); stroke: #1e7a2a; }
.hr { fill: url(#gd); stroke: #9c2f3a; }
.tm { font-size: 11px; fill: #333; text-anchor: middle; }
.tm-b { font-family: "DejaVu Sans", sans-serif; font-size: 12px; font-weight: 700; fill: #222; }

.legend { position: absolute; left: 0; top: 1px; height: 17px; box-sizing: border-box; display: flex; align-items: center; gap: 3px; padding: 0 2px 1px; background: #fff; border: 1px solid #d0d0d0; border-left: 0; border-top: 0; color: #333; font-size: 10.500px; white-space: nowrap; }
.legend span { margin-right: 1px; }
.leg-price { width: 143px; padding-left: 2px; background: #f7f8fb; }
.leg-macd { width: 133px; }
.li { width: 14px; height: 14px; }
.li-dis { width: 15px; height: 14px; }
.ic-out { fill: #fff; stroke: #333; stroke-width: 1; }
.ic-win { fill: #fff; stroke: #222; stroke-width: 1.200; }
.ic-dark { fill: #222; }
.ic-close { fill: #4c4c4c; }
.ic-x { stroke: #fff; stroke-width: 2; fill: none; }
.d-box { fill: #aaa; }
.d-plus { stroke: #eee; stroke-width: 2; fill: none; }
.d-out { fill: #fafafa; stroke: #bbb; stroke-width: 1; }

/* bottom row */
.bottom { flex: 1; display: flex; align-items: center; padding-top: 1px; box-sizing: border-box; }
.share { width: 73px; height: 21px; flex: none; box-sizing: border-box; display: flex; align-items: center; gap: 4px; padding-left: 4px; background: #3d91da; border-radius: 4px; color: #eaf4fd; font-size: 10px; }
.share-ic { width: 14px; height: 16px; }
.sh-l { stroke: #fff; stroke-width: 1.200; fill: none; }
.sh-c { fill: #fff; }
.b-ic1 { width: 24px; height: 22px; margin-left: 5px; }
.bi-chain { fill: none; stroke: #222; stroke-width: 1.500; }
.bi-w { stroke: #222; stroke-width: 1; fill: none; }
.bi-r { fill: #e06a6a; stroke: #222; stroke-width: .7; }
.bi-g { fill: #52d552; stroke: #222; stroke-width: .7; }
.bi-a { fill: #111; }
.b-ic2 { width: 15px; height: 18px; margin-left: 6px; }
.bi-doc { fill: #fff; stroke: #222; stroke-width: 1.500; }
.bi-ln { stroke: #222; stroke-width: 1.200; fill: none; }
.bi-rt { fill: #e04040; }
.bi-gt { fill: #30b040; }
.track { width: 1112px; height: 16px; margin-left: 10px; flex: none; box-sizing: border-box; display: flex; align-items: stretch; border: 1px solid #c4c4c4; border-radius: 3px; }
.tr-btn { width: 14px; flex: none; display: flex; align-items: center; justify-content: center; border-right: 1px solid #c4c4c4; box-sizing: border-box; }
.tr-r { width: 15px; border-right: 0; border-left: 1px solid #c4c4c4; }
.tr-fill { flex: 1; }
.tr-thumb { width: 101px; flex: none; box-sizing: border-box; border-left: 1px solid #ddd; border-radius: 3px; text-align: center; line-height: 13px; color: #aaa; font-size: 11px; }
.arr-l { border-top: 3px solid transparent; border-bottom: 3px solid transparent; border-right: 4px solid #111; }
.arr-r { border-top: 3px solid transparent; border-bottom: 3px solid transparent; border-left: 4px solid #111; }
.z { height: 20px; }
.z1 { width: 18px; margin-left: 3px; }
.z2 { width: 20px; margin-left: 10px; }
.z3 { width: 18px; margin-left: 9px; }
.z4 { width: 19px; margin-left: 9px; }
.z-wr { fill: #fff; stroke: #444; stroke-width: .8; }
.z-bl { stroke: #1a1ad6; stroke-width: 1; fill: none; }
.z-bl2 { stroke: #1a1ad6; stroke-width: 2; fill: none; }

/* taskbar */
.taskbar { height: 41px; flex: none; display: flex; align-items: stretch; background: #111110; color: #e6e6e6; font-size: 12px; }
.tb { position: relative; flex: none; display: flex; align-items: center; justify-content: center; box-sizing: border-box; }
.w48 { width: 47.700px; }
.w46 { width: 46px; }
.w47 { width: 47px; }
.w38 { width: 38px; }
.w42 { width: 42px; }
.w24 { width: 24px; }
.ml { margin-left: 3px; }
.ml3 { margin-left: 3px; }
.ml4 { margin-left: 4px; }
.ml7 { margin-left: 7px; }
.app-w116 { width: 116px; }
.app-w117 { width: 117px; }
.app-w124 { width: 124px; }
.tb-left { justify-content: flex-start; }
.pl4 { padding-left: 4px; }
.pl5 { padding-left: 5px; }
.pl6 { padding-left: 6px; }
.pl9 { padding-left: 9px; }
.active { background: #3b3b3b; }
.under { position: absolute; left: 0; right: 0; bottom: 0; height: 3px; background: #76b9ed; }
.tb-txt { margin-left: 5px; white-space: nowrap; }
.g4 { margin-left: 4px; }
.g3 { margin-left: 3px; }
.tbi-win { width: 16px; height: 16px; }
.tbi-14 { width: 14px; height: 14px; }
.tbi-16 { width: 16px; height: 16px; }
.tbi-20 { width: 20px; height: 20px; }
.tbi-22 { width: 22px; height: 22px; }
.tbi-24 { width: 24px; height: 24px; }
.tbi-c { width: 24px; height: 26px; }
.cort { fill: none; stroke: #fff; stroke-width: 2; }
.tv { fill: none; stroke: #e6e6e6; stroke-width: 1; }
.edge { fill: none; stroke: #1a7fd4; stroke-width: 3.600; }
.st-bag { fill: #f4f4f4; }
.st-h { fill: none; stroke: #eee; stroke-width: 1.200; }
.s1 { fill: #f25022; } .s2 { fill: #7fba00; } .s3 { fill: #00a4ef; } .s4 { fill: #ffb900; }
.w-p { fill: #dfe8f4; }
.w-b { fill: #5a80c0; }
.w-t { font-family: "Liberation Sans", sans-serif; font-size: 11px; font-weight: 700; fill: #fff; text-anchor: middle; }
.fo-b { fill: #e0a92a; }
.fo-f { fill: #f8d775; }
.fo-d { fill: #4fa8d8; }
.fo-w { fill: #eef6fb; }
.mail-l { fill: none; stroke: #111; stroke-width: 1.200; }
.tb-badge .badge { position: absolute; width: 16px; height: 16px; box-sizing: border-box; border-radius: 50%; background: #3c3c3c; border: 1px solid #aaa; color: #fff; font-size: 11px; font-weight: 400; text-align: center; line-height: 14px; }
.b5 { right: 2px; bottom: 4px; }
.b4 { right: 5px; bottom: 4px; }
.ch-r { fill: #e0392c; }
.ch-g { fill: #2f9e44; }
.ch-y { fill: #f5c518; }
.ch-w { fill: #fff; }
.ch-b { fill: #4a8df0; }
.x-p { fill: #dfeadf; }
.x-g { fill: #7fb57f; }
.x-t { font-family: "Liberation Sans", sans-serif; font-size: 13px; font-weight: 700; fill: #fff; }
.x-l { stroke: #7fb57f; stroke-width: 1.500; fill: none; }
.t-g { fill: #4fe24f; }
.t-r { fill: #f26a6a; }
.t-wg { stroke: #2fa82f; stroke-width: 1.200; fill: none; }
.t-wr { stroke: #c84a4a; stroke-width: 1.200; fill: none; }
.tray { margin-left: auto; display: flex; align-items: stretch; width: 310px; }
.tr-l { fill: none; stroke: #e6e6e6; stroke-width: 1; }
.tr-l2 { fill: none; stroke: #e6e6e6; stroke-width: 1.300; }
.shield-k { fill: #111; }
.shield-g { fill: #1f9e4e; }
.mon { fill: #1b3d78; }
.mon-l { fill: none; stroke: #9ad0f0; stroke-width: 1; }
.clock { width: 70px; flex: none; display: flex; flex-direction: column; align-items: center; justify-content: center; gap: 4px; padding-top: 1px; box-sizing: border-box; font-size: 11px; line-height: 15px; color: #e6e6e6; }
.note-l { stroke: #111; stroke-width: 1; fill: none; }
```
